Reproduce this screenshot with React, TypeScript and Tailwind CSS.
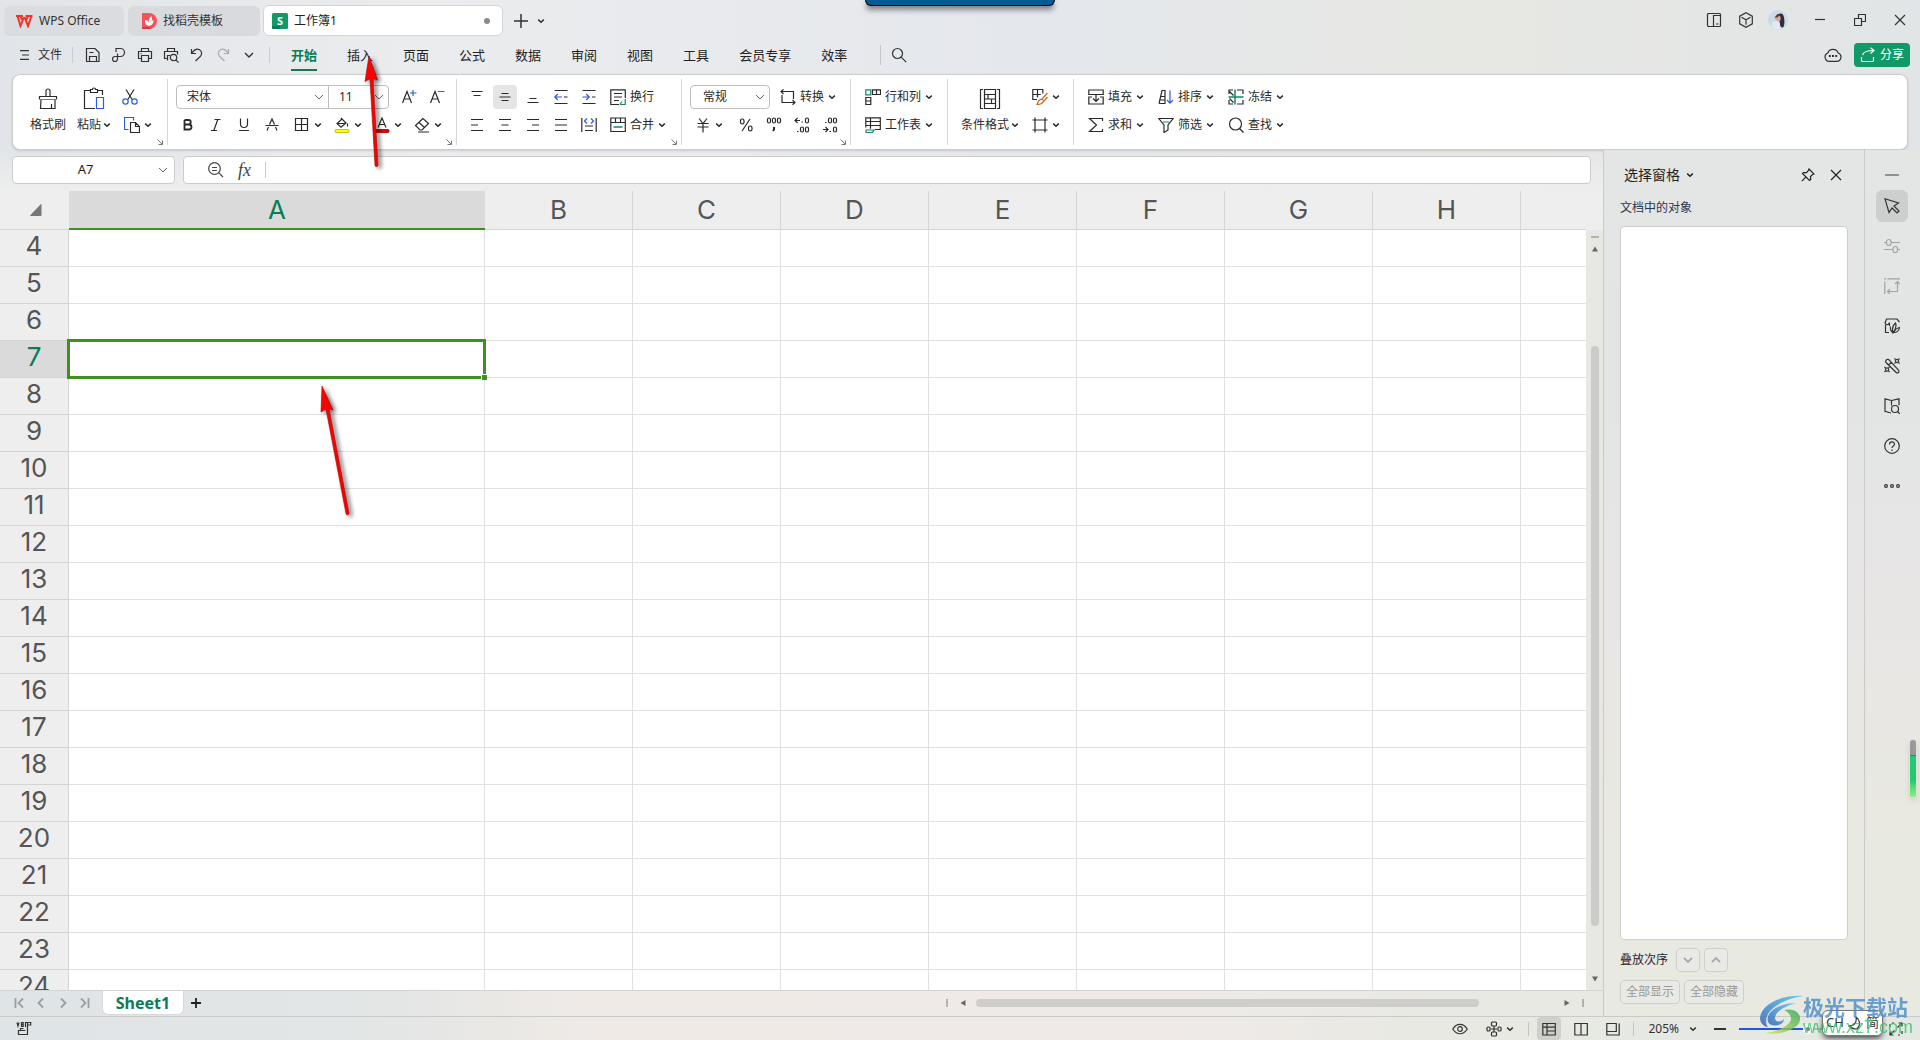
import { useState } from "react";
import type { ReactNode } from "react";
import clsx from "clsx";

const MENU_TABS = ["开始", "插入", "页面", "公式", "数据", "审阅", "视图", "工具", "会员专享", "效率"];
const COLUMNS = ["A", "B", "C", "D", "E", "F", "G", "H"];
const ROWS = Array.from({ length: 21 }, (_, i) => i + 4);

const GREEN = "#0f8a5f";
const BLUE = "#2b5be0";
const ORANGE = "#c8642a";

/* ---------- small building blocks ---------- */

function Icon({ size = 16, width = 1.2, className, children }: {
  size?: number;
  width?: number;
  className?: string;
  children: ReactNode;
}) {
  return (
    <svg
      width={size}
      height={size}
      viewBox={`0 0 ${size} ${size}`}
      fill="none"
      stroke="currentColor"
      strokeWidth={width}
      className={clsx("shrink-0", className)}
      aria-hidden="true"
    >
      {children}
    </svg>
  );
}

function Chevron({ className }: { className?: string }) {
  return (
    <Icon size={8} width={1.5} className={className}>
      <path d="M1.2 2.6 4 5.2l2.8-2.6" />
    </Icon>
  );
}

function WideChevron({ className, width = 1 }: { className?: string; width?: number }) {
  return (
    <Icon size={10} width={width} className={className}>
      <path d="M1 3l4 4 4-4" />
    </Icon>
  );
}

function IconButton({ label, active, children }: { label: string; active?: boolean; children: ReactNode }) {
  return (
    <button type="button" aria-label={label} className="flex h-6 w-7 items-center justify-center">
      <span className={clsx("flex h-6 w-6 items-center justify-center rounded", active && "bg-[#e5e5e5]")}>
        {children}
      </span>
    </button>
  );
}

// icon with a drop-down arrow
function SplitButton({ label, children }: { label: string; children: ReactNode }) {
  return (
    <button type="button" aria-label={label} className="flex h-6 w-10 items-center gap-1 pl-2">
      {children}
      <Chevron />
    </button>
  );
}

function TextButton({ text, menu = true, className, children }: {
  text: string;
  menu?: boolean;
  className?: string;
  children: ReactNode;
}) {
  return (
    <button type="button" className={clsx("flex h-6 items-center gap-1 whitespace-nowrap", className)}>
      {children}
      {text}
      {menu && <Chevron />}
    </button>
  );
}

function Group({ className, corner, children }: { className?: string; corner?: boolean; children: ReactNode }) {
  return (
    <div className={clsx("my-1 shrink-0 border-r border-[#d6d6d6] pt-1", className)}>
      {children}
      {corner && (
        <div className="flex justify-end pr-1">
          <Icon size={6} width={1} className="text-[#777]">
            <path d="M.5.5l4.5 4.5M5.5 1.500v4h-4" />
          </Icon>
        </div>
      )}
    </div>
  );
}

function Row({ children }: { children: ReactNode }) {
  return <div className="flex h-7 items-center">{children}</div>;
}

/* ---------- title bar ---------- */

function TitleBar() {
  return (
    <div className="flex h-9 items-end pl-1 text-xs text-[#333]">
      <button type="button" className="flex h-[30px] w-30 items-center gap-1.5 rounded-md bg-[#dadcdf] pl-3 whitespace-nowrap">
        <svg width="17" height="14" viewBox="0 0 17 14" fill="none" stroke="#f0342b" strokeWidth="2" className="shrink-0">
          <path d="M0 2h7M1.500 2l3 10L8 3M4.500 2l1.500 4M16.500 2h-7M15.500 2l-3.500 10L8.500 3M12 2l-1.500 4" />
        </svg>
        WPS Office
      </button>
      <button type="button" className="ml-1 flex h-[30px] w-33 items-center gap-1.5 rounded-md bg-[#d9dadd] pl-3.5 whitespace-nowrap">
        <svg width="15" height="16" viewBox="0 0 15 16" className="shrink-0">
          <path d="M0 0h7a8 8 0 0 1 0 16H0z" fill="#f2545b" />
          <path d="M0 14h7l3 1-3 1H0z" fill="#d93a44" />
          <path d="M7 13C3 12 3 9 3 7c2 0 3 1 3.500 3C6.500 7 7 5 9.500 3c1 3 .5 4 0 5l2-1c0 3-1 5-4.500 6z" fill="#fff" />
        </svg>
        找稻壳模板
      </button>
      <div className="ml-[3px] flex h-[31px] w-60 items-center rounded-md border border-[#d3d4d6] bg-white pl-2 text-[#222]">
        <svg width="16" height="16" viewBox="0 0 16 16" className="mr-1.5">
          <rect width="16" height="16" rx="1.500" fill="#109a67" />
          <path d="M0 13h8v3H1.500A1.500 1.500 0 0 1 0 14.500z" fill="#0a7a50" />
          <text x="8" y="11.500" textAnchor="middle" fontSize="11" fontWeight="700" fill="#fff" fontFamily="Noto Sans, sans-serif">
            S
          </text>
        </svg>
        工作簿1
        <span className="mr-3 ml-auto h-1.5 w-1.5 rounded-full bg-[#8b8b8b]" />
      </div>
      <button type="button" aria-label="新建" className="ml-1.5 flex h-[30px] w-6 items-center justify-center">
        <Icon size={14} width={1.5}>
          <path d="M7 0v14M0 7h14" />
        </Icon>
      </button>
      <button type="button" aria-label="标签列表" className="flex h-[30px] w-4 items-center justify-center">
        <Chevron />
      </button>

      <div className="ml-auto flex h-8 items-center">
        <button type="button" aria-label="分屏" className="flex w-8 justify-center">
          <Icon>
            <rect x="1.500" y="1.500" width="13" height="13" rx="1" />
            <path d="M7.500 14.500v-11h7M10 12h2.500" />
          </Icon>
        </button>
        <button type="button" aria-label="应用" className="flex w-8 justify-center">
          <Icon>
            <path d="M8 .8l6.300 3.400v7.600L8 15.200l-6.300-3.400V4.200zM3.500 5.200 8 7.700l4.500-2.500M8 7.700v5" />
          </Icon>
        </button>
        <button type="button" aria-label="账号" className="flex w-8 justify-center">
          <svg width="20" height="20" viewBox="0 0 20 20">
            <circle cx="10" cy="10" r="10" fill="#ccd9e6" />
            <path d="M10 4.500c3-2 5.500-.5 6 3s.8 6-.5 9.500c-1.500 1-3 0-3.500-2l-1-7z" fill="#352a38" />
            <path d="M7.500 7c1-2.500 4.500-2 5 0s0 4.500-2 4.500-4-2-3-4.500z" fill="#d9a59b" />
            <path d="M6.500 7.500l3-3.500 3 1-3.500 2.500z" fill="#4a3a44" />
            <path d="M4 12.500l5-2 3 3v6c-3 .5-6 0-8.500-2.500z" fill="#dfeaf2" />
          </svg>
        </button>
        <button type="button" aria-label="最小化" className="ml-1.5 flex w-10 justify-center">
          <Icon size={12}>
            <path d="M1 5.500h10" />
          </Icon>
        </button>
        <button type="button" aria-label="还原" className="flex w-10 justify-center">
          <Icon size={12}>
            <path d="M.5 4.500h7v7h-7zM4.500 4.500v-4h7v7h-4" />
          </Icon>
        </button>
        <button type="button" aria-label="关闭" className="flex w-10 justify-center">
          <Icon size={12}>
            <path d="M1 1l10 10M11 1 1 11" />
          </Icon>
        </button>
      </div>
    </div>
  );
}

/* ---------- menu bar ---------- */

function MenuBar({ tab, onTab }: { tab: string; onTab: (t: string) => void }) {
  return (
    <div className="flex h-[38px] items-center text-[#333]">
      <button type="button" className="ml-5 flex w-10 items-center gap-2 text-xs whitespace-nowrap">
        <Icon size={10}>
          <path d="M0 .6h9M2 5h7M0 9.400h9" />
        </Icon>
        文件
      </button>
      <div className="mr-[7px] ml-3 h-4 w-px bg-[#c9cbce]" />
      <div className="flex">
        <IconCell label="保存">
          <path d="M2 1.500h8l4 4v9H1.500v-13zM4.500 14.500V9.500h7v5M4.500 5.500h4" />
        </IconCell>
        <IconCell label="输出为PDF">
          <path d="M5 5V1.500h4.500a4 4 0 0 1 0 8H4a2.500 2.500 0 1 0 2.500 2.500V6.500" />
        </IconCell>
        <IconCell label="打印">
          <path d="M4.500 4.500v-3h7v3M4 11.500H1.500v-7h13v7H12M4.500 8.500h7v6h-7zM3.500 6.500h1" />
        </IconCell>
        <IconCell label="打印预览">
          <path d="M4.500 4.500v-3h7v3M4 11.500H1.500v-7h13v3M4.500 13.500v-5H7" />
          <circle cx="10.500" cy="10.500" r="3.200" />
          <path d="M12.800 12.800l2.700 2.700" />
        </IconCell>
        <IconCell label="撤销">
          <path d="M2.500 2v4.500H7M2.800 6.200C5 3 8 1.500 10.500 2.800c3 1.700 2.500 5 .5 7L6.500 14" />
        </IconCell>
        <IconCell label="恢复" dim>
          <path d="M13.500 2v4.500H9M13.200 6.200C11 3 8 1.500 5.500 2.800c-3 1.700-2.500 5-.5 7L9.500 14" />
        </IconCell>
        <button type="button" aria-label="更多" className="flex w-[26px] items-center justify-center">
          <WideChevron width={1.4} />
        </button>
      </div>
      <div className="mr-[21px] ml-[7px] h-4 w-px bg-[#c9cbce]" />
      <nav className="flex gap-[30px] pt-[3px] text-[13px]">
        {MENU_TABS.map((t) => (
          <button
            key={t}
            type="button"
            onClick={() => onTab(t)}
            className={clsx(
              "h-7 border-b-2 whitespace-nowrap",
              t === tab ? "border-[#0a7d55] font-bold text-[#0a7d55]" : "border-transparent text-[#222]",
            )}
          >
            {t}
          </button>
        ))}
      </nav>
      <div className="ml-[33px] h-5 w-px bg-[#c4c6c9]" />
      <button type="button" aria-label="搜索" className="ml-2.5">
        <Icon>
          <circle cx="6.500" cy="6.500" r="5" />
          <path d="M10.200 10.200l5 5" />
        </Icon>
      </button>

      <button type="button" aria-label="云状态" className="ml-auto">
        <svg width="18" height="16" viewBox="0 0 18 16" fill="none" stroke="currentColor" strokeWidth="1.200">
          <path d="M5.500 14.300a4.300 4.300 0 0 1-1.700-8.300 5.500 5.500 0 0 1 10.400 0 4.300 4.300 0 0 1-1.700 8.300z" />
          <path d="M4.800 9h2M8 9h2M11.200 9h2" strokeWidth="2" />
        </svg>
      </button>
      <button
        type="button"
        className="mr-2.5 ml-3 flex h-6 w-14 items-center gap-1 rounded bg-[#109a67] pl-1.5 text-xs whitespace-nowrap text-white"
      >
        <Icon>
          <path d="M1.500 10v3.500a1 1 0 0 0 1 1h10a1 1 0 0 0 1-1V10M2.500 8c1-3 4-4.500 11-4.500M10.500 .8l3.500 2.700-3.500 3" />
        </Icon>
        分享
      </button>
    </div>
  );
}

function IconCell({ label, dim, children }: { label: string; dim?: boolean; children: ReactNode }) {
  return (
    <button type="button" aria-label={label} className="flex w-[26px] justify-center">
      <Icon className={dim ? "text-[#a9abae]" : undefined}>{children}</Icon>
    </button>
  );
}

/* ---------- ribbon ---------- */

function Ribbon() {
  return (
    <section className="mx-3 flex h-[76px] overflow-hidden rounded-lg border border-[#cbcccd] bg-white pl-px text-xs text-[#2a2a2a] shadow-sm">
      <Group className="w-[154px]" corner>
        <div className="flex pl-2.5">
          <button type="button" className="flex w-12 flex-col items-center pt-1">
            <Icon size={24}>
              <path d="M10 9.500V4a2 2 0 0 1 4 0v5.500M3.500 12.500v-3h17v3M5 12.500l-.5 9h14.500v-9M15.500 21v-4" />
              <path d="M4 12.500h16" stroke={ORANGE} />
            </Icon>
            <span className="leading-7 whitespace-nowrap">格式刷</span>
          </button>
          <button type="button" className="flex w-11 flex-col items-center pt-1">
            <Icon size={24}>
              <path d="M8 3.500H2.500v18H13M16 3.500h4.500V8M8.500 5.500v-3h2a1.500 1.500 0 0 1 3 0h2v3z" />
              <path d="M14.500 10.500h7v11h-7z" stroke={BLUE} />
            </Icon>
            <span className="flex items-center gap-0.5 leading-7 whitespace-nowrap">
              粘贴
              <Chevron />
            </span>
          </button>
          <div>
            <Row>
              <IconButton label="剪切">
                <Icon>
                  <path d="M4 .5l6.500 10.500M12 .5 5.500 11" />
                  <circle cx="3.500" cy="12.500" r="2.700" stroke={BLUE} />
                  <circle cx="12.500" cy="12.500" r="2.700" stroke={BLUE} />
                </Icon>
              </IconButton>
            </Row>
            <Row>
              <SplitButton label="复制">
                <Icon>
                  <path d="M4.500 12.500h-4v-12h9v3" stroke={BLUE} />
                  <path d="M6.500 5.500h5l4 4v6h-9zM11.500 5.500v4h4" />
                </Icon>
              </SplitButton>
            </Row>
          </div>
        </div>
      </Group>

      <Group className="w-[289px]" corner>
        <Row>
          <div className="ml-2 flex h-6 w-[213px] rounded border border-[#bdbdbd]">
            <label className="flex w-[152px] items-center border-r border-[#bdbdbd]">
              <select aria-label="字体" className="min-w-0 flex-1 appearance-none pl-2.5 outline-none">
                <option>宋体</option>
              </select>
              <WideChevron className="mr-1 text-[#666]" />
            </label>
            <label className="flex flex-1 items-center">
              <select aria-label="字号" className="min-w-0 flex-1 appearance-none pl-2.5 outline-none">
                <option>11</option>
              </select>
              <WideChevron className="mr-1 text-[#666]" />
            </label>
          </div>
          <div className="ml-1.5 flex">
            <IconButton label="增大字号">
              <Icon>
                <path d="M1.500 14 6 2.500 10.500 14M3 10h6" />
                <path d="M12 1v6M9 4h6.500" stroke={BLUE} />
              </Icon>
            </IconButton>
            <IconButton label="减小字号">
              <Icon>
                <path d="M1.500 14 6 2.500 10.500 14M3 10h6" />
                <path d="M9 2.500h6.500" stroke={BLUE} />
              </Icon>
            </IconButton>
          </div>
        </Row>
        <Row>
          <div className="flex pl-1.5">
            <IconButton label="加粗">
              <Icon width={1.8}>
                <path d="M4.500 3v9.500H9a2.500 2.500 0 0 0 0-5H4.500M4.500 3h4a2.200 2.200 0 0 1 0 4.500" />
              </Icon>
            </IconButton>
            <IconButton label="倾斜">
              <Icon>
                <path d="M6.500 2.500h6M3 13.500h6M9.800 2.500l-4 11" />
              </Icon>
            </IconButton>
            <IconButton label="下划线">
              <Icon>
                <path d="M4.500 1.500V7a3.500 3.500 0 0 0 7 0V1.500M3 13.500h10" />
              </Icon>
            </IconButton>
            <IconButton label="删除线">
              <Icon>
                <path d="M5.500 7.500 8 2l2.500 5.500M4.500 10 3 13.500M11.500 10l1.500 3.500M1.500 8.500h13" />
              </Icon>
            </IconButton>
            <SplitButton label="边框">
              <Icon>
                <path d="M1.500 1.500h12v12h-12zM7.500 1.500v12M1.500 7.500h12" />
              </Icon>
            </SplitButton>
            <SplitButton label="填充颜色">
              <Icon>
                <path d="M8 2 3 6.500l4 3.800L12 6 7 1M3.500 6.500h8M13.500 6.500v3" />
                <rect x="1" y="12.500" width="14" height="3" rx="1" fill="#ffff00" stroke="#b5b500" strokeWidth=".8" />
              </Icon>
            </SplitButton>
            <SplitButton label="字体颜色">
              <Icon>
                <path d="M4 10.500 8 1l4 9.500M5.500 7.500h5" />
                <rect x="1" y="12.500" width="14" height="3" rx="1" fill="#e60000" stroke="#a80000" strokeWidth=".8" />
              </Icon>
            </SplitButton>
            <SplitButton label="清除">
              <Icon>
                <path d="M9 1.500 1.500 8.500 6 13h2L14.500 6.500zM5 5.500l5.500 5M4 15h11" />
              </Icon>
            </SplitButton>
          </div>
        </Row>
      </Group>

      <Group className="w-[225px]" corner>
        <Row>
          <div className="flex pl-1.5">
            <IconButton label="顶端对齐">
              <Icon>
                <path d="M2.500 2.500h11M4.500 6.500h7" />
              </Icon>
            </IconButton>
            <IconButton label="垂直居中" active>
              <Icon>
                <path d="M4.500 4.500h7M2.500 8h11M4.500 11.500h7" />
              </Icon>
            </IconButton>
            <IconButton label="底端对齐">
              <Icon>
                <path d="M4.500 9.500h7M2.500 13.500h11" />
              </Icon>
            </IconButton>
            <IconButton label="减少缩进">
              <Icon>
                <path d="M1.500 1.500h13M11 8h3.500M1.500 14.500h13" />
                <path d="M9 8H2M4.800 5 1.800 8l3 3" stroke={BLUE} />
              </Icon>
            </IconButton>
            <IconButton label="增加缩进">
              <Icon>
                <path d="M1.500 1.500h13M11 8h3.500M1.500 14.500h13" />
                <path d="M1.500 8H8M5.200 5l3 3-3 3" stroke={BLUE} />
              </Icon>
            </IconButton>
          </div>
          <TextButton text="换行" menu={false} className="pl-[7px]">
            <Icon>
              <path d="M9 15.500H.8V.8h14.500V9M4 4.500h8M4 8h8M4 11.500h5" />
              <path d="M15.200 10v5.500H10M12 12.500l-2 3" stroke={GREEN} />
            </Icon>
          </TextButton>
        </Row>
        <Row>
          <div className="flex pl-1.5">
            <IconButton label="左对齐">
              <Icon>
                <path d="M2 2.500h12M2 8h7M2 13.500h12" />
              </Icon>
            </IconButton>
            <IconButton label="居中">
              <Icon>
                <path d="M2 2.500h12M4.500 8h7M2 13.500h12" />
              </Icon>
            </IconButton>
            <IconButton label="右对齐">
              <Icon>
                <path d="M2 2.500h12M7 8h7M2 13.500h12" />
              </Icon>
            </IconButton>
            <IconButton label="两端对齐">
              <Icon>
                <path d="M2 2.500h12M2 8h12M2 13.500h12" />
              </Icon>
            </IconButton>
            <IconButton label="分散对齐">
              <Icon>
                <path d="M.8 1v14M15.200 1v14M4 9h8M4 13.500h8" />
                <path d="M6 1.500 3.500 4 6 6.500M10 1.500 12.500 4 10 6.500" stroke={BLUE} />
              </Icon>
            </IconButton>
          </div>
          <TextButton text="合并" className="pl-[7px]">
            <Icon>
              <path d="M.8 1h14.500v13.500H.8zM.8 5.500h14.500M5.500 1v4.500M10.500 1v4.500" />
              <path d="M3.500 10h9" stroke={GREEN} strokeWidth="1.600" />
            </Icon>
          </TextButton>
        </Row>
      </Group>

      <Group className="w-[169px]" corner>
        <Row>
          <label className="ml-2 flex h-6 w-20 items-center rounded border border-[#bdbdbd]">
            <select aria-label="数字格式" className="min-w-0 flex-1 appearance-none pl-3 outline-none">
              <option>常规</option>
            </select>
            <WideChevron className="mr-1 text-[#666]" />
          </label>
          <TextButton text="转换" className="ml-2.5">
            <Icon>
              <path d="M2 6v7.500h13M12.500 11l2.500 2.500-2.500 2.300M13.500 10V2.500H1M3.500 .3 1 2.500 3.500 5" />
            </Icon>
          </TextButton>
        </Row>
        <Row>
          <div className="flex pl-[5px]">
            <SplitButton label="货币">
              <Icon>
                <path d="M4 1.500l4 5 4-5M2.500 6.500h11M2.500 10h11M8 6.500v9" />
              </Icon>
            </SplitButton>
            <div className="ml-[5px] flex">
              <IconButton label="百分比">
                <Icon>
                  <path d="M12 2 4 14" />
                  <rect x="2.500" y="2" width="3.500" height="5" rx="1.700" />
                  <rect x="10.500" y="9" width="3.500" height="5" rx="1.700" />
                </Icon>
              </IconButton>
              <IconButton label="千位分隔">
                <Icon>
                  <rect x="1.500" y="1" width="3" height="5" rx="1.500" />
                  <rect x="6.500" y="1" width="3" height="5" rx="1.500" />
                  <rect x="11.500" y="1" width="3" height="5" rx="1.500" />
                  <path d="M8 10v2.500L7 14" strokeWidth="2" />
                </Icon>
              </IconButton>
              <IconButton label="增加小数位">
                <Icon>
                  <path d="M6 3.500H1M3.500 1 1 3.500 3.500 6M7.500 5h1.500M3 14.500h1.500" />
                  <rect x="11.500" y="1" width="3" height="5" rx="1.500" />
                  <rect x="11.500" y="10" width="3" height="5" rx="1.500" />
                  <rect x="6.500" y="10" width="3" height="5" rx="1.500" />
                </Icon>
              </IconButton>
              <IconButton label="减少小数位">
                <Icon>
                  <path d="M1 12.500h5M3.500 10 6 12.500 3.500 15M7.500 14.500H9M3 5.500h1.500" />
                  <rect x="11.500" y="1" width="3" height="5" rx="1.500" />
                  <rect x="6.500" y="1" width="3" height="5" rx="1.500" />
                  <rect x="11.500" y="10" width="3" height="5" rx="1.500" />
                </Icon>
              </IconButton>
            </div>
          </div>
        </Row>
      </Group>

      <Group className="w-[97px] pl-3.5">
        <Row>
          <TextButton text="行和列">
            <Icon>
              <path d="M7.500 5.500V.8h8v4.700zM11.500 .8v4.700M.8 8.500h5v7h-5zM.8 12h5" />
              <path d="M.8 .8h5v5h-5z" stroke={GREEN} />
            </Icon>
          </TextButton>
        </Row>
        <Row>
          <TextButton text="工作表">
            <Icon>
              <path d="M.8 10.500V.8h14.500v11.700H10M.8 4.500h14.500M.8 10.500V8.500h14.500M5.500 .8v11" />
              <path d="M1 13h8l-1.500 2.500H1z" stroke={GREEN} />
            </Icon>
          </TextButton>
        </Row>
      </Group>

      <Group className="w-[126px] pl-3">
        <div className="flex">
          <button type="button" className="flex w-15 flex-col items-center pt-1">
            <Icon size={24}>
              <path d="M5 2.500H2.500v19H5M19 2.500h2.500v19H19M6.500 2.500h11v19h-11zM6.500 7.500h11M6.500 16.500h11M10 7.500v4.500h7.500M6.500 12h7v4.500" />
            </Icon>
            <span className="flex items-center gap-0.5 leading-7 whitespace-nowrap">
              条件格式
              <Chevron />
            </span>
          </button>
          <div className="ml-1">
            <Row>
              <SplitButton label="表格样式">
                <Icon>
                  <path d="M5 10.500H.8v-10h10v4M.8 5.500h8M5.500 .5v8" />
                  <path d="M15.500 4 10 10M15.500 8l-3.500 4M5 15.500c1-3 2-6 5-5s1 5-5 5z" stroke={ORANGE} />
                </Icon>
              </SplitButton>
            </Row>
            <Row>
              <SplitButton label="单元格">
                <Icon>
                  <path d="M3 .5v15M13 .5v15M.5 3h15M.5 13h15" />
                </Icon>
              </SplitButton>
            </Row>
          </div>
        </div>
      </Group>

      <div className="pt-2 pl-3.5">
        <Row>
          <TextButton text="填充" className="w-[70px]">
            <Icon>
              <path d="M.8 5.500V1h14.400v4.500zM4 8H.8v7h14.400V8H12M8 6v6.500M5 9.500l3 3 3-3" />
            </Icon>
          </TextButton>
          <TextButton text="排序" className="w-[70px]">
            <Icon>
              <path d="M1 14.500 4 1.500h3v6H2.800M7 7.500v7H1M1.800 11H7" />
              <path d="M12 1.500V14M9 11l3 3.200 3-3.200" stroke={BLUE} />
            </Icon>
          </TextButton>
          <TextButton text="冻结">
            <Icon>
              <path d="M1 5V1h4M1 11v4h4M9 1h6v4M9 15h6v-4M1.500 2.500l4 4M1.500 9.500l4 4" />
              <path d="M7 .5v15M.5 8h15" stroke={GREEN} strokeWidth="1.500" />
            </Icon>
          </TextButton>
        </Row>
        <Row>
          <TextButton text="求和" className="w-[70px]">
            <Icon>
              <path d="M14.500 4V1.500h-13L8.500 8l-7 6.500h13V12" />
            </Icon>
          </TextButton>
          <TextButton text="筛选" className="w-[70px]">
            <Icon>
              <path d="M.8 1.500h14.400L10 8v5l-4 2.500V8z" />
              <path d="M5 5h6" stroke={GREEN} />
            </Icon>
          </TextButton>
          <TextButton text="查找">
            <Icon>
              <circle cx="7.500" cy="7" r="6" />
              <path d="M11.500 11.500l4 4" />
            </Icon>
          </TextButton>
        </Row>
      </div>
    </section>
  );
}

/* ---------- formula bar and grid ---------- */

function FormulaBar() {
  return (
    <div className="flex h-[41px] items-start gap-2 bg-linear-to-b from-[#eeeeee]/0 to-[#eeeeee] pt-1.5 pr-3 pl-3 text-[13px] text-[#222]">
      <div className="flex h-7 w-[163px] items-center rounded border border-[#cacbcb] bg-white pr-1.5">
        <input aria-label="名称框" defaultValue="A7" className="min-w-0 flex-1 text-center outline-none" />
        <WideChevron className="text-[#666]" />
      </div>
      <div className="flex h-7 flex-1 items-center rounded border border-[#cacbcb] bg-white pl-6">
        <Icon className="text-[#444]">
          <circle cx="6.500" cy="6.500" r="5.800" />
          <path d="M10.700 10.700l4.300 4.300M4 5.500h5M4 8.500h5" />
        </Icon>
        <span className="ml-3.5 w-5 font-['Liberation_Serif',serif] text-lg leading-5 text-[#444] italic">fx</span>
        <span className="ml-[7px] h-4 w-px bg-[#ccc]" />
        <input aria-label="编辑栏" className="min-w-0 flex-1 px-2 outline-none" />
      </div>
    </div>
  );
}

function Grid() {
  return (
    <div className="flex min-h-0 flex-1 overflow-hidden bg-[#eeeeee]">
      <div className="min-w-0 flex-1 overflow-hidden">
        <table className="w-full table-fixed border-separate border-spacing-0 font-['Inter','Noto_Sans',sans-serif] text-[26px] leading-8 text-[#555]">
          <colgroup>
            <col className="w-[69px]" />
            <col className="w-[416px]" />
            {COLUMNS.slice(1).map((c) => (
              <col key={c} className="w-[148px]" />
            ))}
            <col />
          </colgroup>
          <thead>
            <tr className="h-[39px]">
              <th className="border-b border-[#d4d4d4] p-0">
                <svg width="12" height="12" viewBox="0 0 12 12" className="ml-[30px]" aria-hidden="true">
                  <path d="M11 .5v11H.5z" fill="#777" stroke="#777" strokeLinejoin="round" />
                </svg>
              </th>
              {COLUMNS.map((c) => (
                <th
                  key={c}
                  scope="col"
                  className={clsx(
                    "p-0 font-normal",
                    c === "A"
                      ? "border-b-2 border-[#3f8f22] bg-[#dadada] text-[#0a7d55]"
                      : "border-r border-b border-[#d4d4d4]",
                  )}
                >
                  {c}
                </th>
              ))}
              <th className="border-b border-[#d4d4d4] p-0" />
            </tr>
          </thead>
          <tbody>
            {ROWS.map((r) => (
              <tr key={r} className="h-[37px]">
                <th
                  scope="row"
                  className={clsx(
                    "border-r border-b border-[#d4d4d4] p-0 align-top font-normal",
                    r === 7 ? "bg-[#dadada] text-[#0a7d55]" : "bg-[#eeeeee]",
                  )}
                >
                  {r}
                </th>
                {COLUMNS.map((c) => (
                  <td key={c} className="relative border-r border-b border-[#e1e1e1] bg-white p-0">
                    {r === 7 && c === "A" && (
                      <div className="absolute -inset-0.5 z-10 border-3 border-[#3f8f22]">
                        <span className="absolute -right-1 -bottom-1 h-1.5 w-1.5 border-t border-l border-white bg-[#3f8f22]" />
                      </div>
                    )}
                  </td>
                ))}
                <td className="border-b border-[#e1e1e1] bg-white p-0" />
              </tr>
            ))}
          </tbody>
        </table>
      </div>
      <div className="flex w-[17px] shrink-0 flex-col pt-[39px]">
        <div className="flex min-h-0 flex-1 flex-col items-center bg-[#e6e8e1] pt-1.5 pb-2">
          <span className="h-0.5 w-2 bg-[#b2b3b0]" />
          <Triangle className="mt-2" />
          <span className="mt-[94px] min-h-0 w-2 flex-1 rounded-full bg-[#cbccc9]" />
          <Triangle className="mt-[50px] rotate-180" />
        </div>
      </div>
    </div>
  );
}

function Triangle({ className }: { className?: string }) {
  return (
    <svg width="6" height="6" viewBox="0 0 6 6" className={clsx("shrink-0", className)} aria-hidden="true">
      <path d="M3 .5 6 5.500H0z" fill="#666" />
    </svg>
  );
}

function SheetTabs() {
  return (
    <div className="flex h-[26px] shrink-0 items-start border-t border-[#d2d4d3] text-[#9b9d9f]">
      <div className="flex h-6 items-center gap-2.5 pl-[13px]">
        <Icon size={12} width={1.8}>
          <path d="M2.500 1v10M10 1.500 5.500 6l4.500 4.500" />
        </Icon>
        <Icon size={12} width={1.8}>
          <path d="M8 1.500 3.500 6 8 10.500" />
        </Icon>
        <Icon size={12} width={1.8}>
          <path d="M4 1.500 8.500 6 4 10.500" />
        </Icon>
        <Icon size={12} width={1.8}>
          <path d="M2 1.500 6.500 6 2 10.500M9.500 1v10" />
        </Icon>
      </div>
      <button
        type="button"
        className="ml-[11px] h-6 w-[82px] rounded-b-md border border-t-0 border-[#d8dada] bg-white text-base leading-5 font-bold text-[#0a7d55]"
      >
        Sheet1
      </button>
      <button type="button" aria-label="新建工作表" className="flex h-6 w-6 items-center justify-center text-[#222]">
        <Icon size={10} width={1.8}>
          <path d="M5 0v10M0 5h10" />
        </Icon>
      </button>
      <div className="ml-auto flex h-6 w-[657px] items-center">
        <span className="h-2 w-0.5 bg-[#b5b3b1]" />
        <Triangle className="ml-3 -rotate-90" />
        <span className="ml-2.5 h-2 w-[503px] rounded-full bg-[#cfcdca]" />
        <Triangle className="mr-3 ml-auto rotate-90" />
        <span className="mr-[19px] h-2 w-0.5 bg-[#b0b1ac]" />
      </div>
    </div>
  );
}

/* ---------- selection pane and side bar ---------- */

function SelectionPane() {
  return (
    <aside className="flex w-[261px] shrink-0 flex-col border-l border-[#c9cbc8] pr-4 pl-4 text-xs text-[#2b3550]">
      <div className="flex h-[49px] items-center pl-1 text-sm text-[#222]">
        选择窗格
        <Chevron className="ml-1.5" />
        <button type="button" aria-label="固定" className="ml-auto">
          <Icon size={14}>
            <path d="M8 1l5 5-1.500.5-2 2 .2 3L8.500 12.500 1.500 5.500l1-1 3 .2L7.500 2.500zM4.800 9.200.8 13.200" />
          </Icon>
        </button>
        <button type="button" aria-label="关闭窗格" className="mr-1.5 ml-[15px]">
          <Icon size={12}>
            <path d="M1 1l10 10M11 1 1 11" />
          </Icon>
        </button>
      </div>
      <div className="h-[27px] pt-px leading-4">文档中的对象</div>
      <div className="min-h-0 flex-1 rounded border border-[#cccecd] bg-white" />
      <div className="mt-2 flex h-6 items-center text-[#1f2533]">
        <span className="w-14">叠放次序</span>
        <button type="button" aria-label="下移一层" className="flex h-6 w-6 items-center justify-center rounded border border-[#cfd0ca] bg-[#e9eae5] text-[#aaa]">
          <WideChevron width={1.8} />
        </button>
        <button type="button" aria-label="上移一层" className="ml-1 flex h-6 w-6 items-center justify-center rounded border border-[#cfd0ca] bg-[#e9eae5] text-[#aaa]">
          <WideChevron width={1.8} className="rotate-180" />
        </button>
      </div>
      <div className="mt-2 mb-3 flex gap-1 text-[#999]">
        <button type="button" className="h-6 w-15 rounded border border-[#cfd0ca] bg-[#e9eae5] whitespace-nowrap">
          全部显示
        </button>
        <button type="button" className="h-6 w-15 rounded border border-[#cfd0ca] bg-[#e9eae5] whitespace-nowrap">
          全部隐藏
        </button>
      </div>
    </aside>
  );
}

function SideIcon({ label, active, dim, children }: { label: string; active?: boolean; dim?: boolean; children: ReactNode }) {
  return (
    <button
      type="button"
      aria-label={label}
      className={clsx(
        "flex h-8 w-8 items-center justify-center rounded-md",
        active && "bg-[#cdcfce]",
        dim ? "text-[#a2a4a4]" : "text-[#333]",
      )}
    >
      <Icon>{children}</Icon>
    </button>
  );
}

function SideBar() {
  return (
    <div className="flex w-14 shrink-0 flex-col items-center gap-2 border-l border-[#c9cbca] pt-6 pr-px">
      <span className="mb-1.5 h-0.5 w-3.5 bg-[#8f9192]" />
      <SideIcon label="选择" active>
        <path d="M1 .8 14.500 5 10 8l5 5-2 2-5-5-3 4.500z" />
      </SideIcon>
      <SideIcon label="属性" dim>
        <path d="M0 4.500h2.500M7 4.500h9M0 11.500h9M13.500 11.500H16" />
        <rect x="2.500" y="1.500" width="4.500" height="6" rx="2.200" />
        <rect x="9" y="8.500" width="4.500" height="6" rx="2.200" />
      </SideIcon>
      <SideIcon label="转换" dim>
        <path d="M3.500 .8H16M.8 3.500V16M0 .8h2M13.500 4v9.500H4M11 6l2.500-2.500L16 6M6 11l-2.500 2.500L6 16" />
      </SideIcon>
      <SideIcon label="稻壳资源">
        <path d="M5 14.500H1.500V7M1 5.500 2.500 1h10.500l2.500 3M1 4.500c0 3 3.500 3 4.500 0M5.500 5v3M9 15c-3-2-3-4-2.500-6.500M9 15c-1-4 0-8 2.500-10 1 3 0 7-2.500 10zM10 14.500c1-3 3-4.500 5.500-5-.5 3-2.500 5-5.500 5z" />
      </SideIcon>
      <SideIcon label="智能工具">
        <path d="M2 4.500a2 2 0 0 1 3.300-2.300l9.200 10a1.500 1.500 0 0 1-2.300 2.300zM4.500 7l2.700-2.700" />
        <circle cx="13" cy="3" r="1.600" />
        <circle cx="3" cy="11.500" r="1.600" />
        <path d="M15.500 .5l-1 1M10.500 5.500l1-1M10.500 .5l1 1M15.500 5.500l-1-1M.5 14l1-1M5.500 9l-1 1M.5 9l1 1M5.500 14l-1-1" />
      </SideIcon>
      <SideIcon label="查阅">
        <path d="M7.500 2.500 1 .8v12.500l6 1.700M7.500 2.500 15 .8v6.500M7.500 2.500v5" />
        <circle cx="11" cy="11" r="3.500" />
        <path d="M13.500 13.500 16 16" />
      </SideIcon>
      <SideIcon label="帮助">
        <circle cx="8" cy="8" r="7.300" />
        <path d="M5.500 6.500c0-3.500 5-3.300 5-.4C10.500 8 8 8 8 10M8 11.500V13" />
      </SideIcon>
      <SideIcon label="更多">
        <circle cx="2" cy="8" r="1.400" />
        <circle cx="8" cy="8" r="1.400" />
        <circle cx="14" cy="8" r="1.400" />
      </SideIcon>
    </div>
  );
}

/* ---------- status bar ---------- */

function StatusBar() {
  return (
    <div className="flex h-6 shrink-0 items-center border-t border-[#c8cac8] text-[#333]">
      <button type="button" aria-label="宏" className="ml-4">
        <Icon>
          <path d="M1 1.500 2 5l1-3.500M5.500 1.500v4h1.700v-4zM5.500 3.500h2M9.500 6V1.500h5.200V4H12M11.500 2v11.500H2.500v-4h7M4.500 9.500V7.500h3" />
        </Icon>
      </button>
      <button type="button" aria-label="护眼模式" className="ml-auto">
        <Icon>
          <path d="M.8 8C4.500 1.700 11.500 1.700 15.200 8 11.500 14.300 4.500 14.300.8 8z" />
          <circle cx="8" cy="8" r="2.300" />
        </Icon>
      </button>
      <button type="button" aria-label="阅读模式" className="ml-[18px] flex items-center gap-1">
        <Icon>
          <rect x="5.500" y="1" width="5" height="4" rx="1" />
          <rect x="5.500" y="11" width="5" height="4" rx="1" />
          <rect x="1" y="6" width="3" height="4" rx="1" />
          <rect x="12" y="6" width="3" height="4" rx="1" />
          <path d="M8 5v6M5 8h6" />
        </Icon>
        <Chevron />
      </button>
      <span className="mr-2 ml-3.5 h-3.5 w-px bg-[#c4c5bf]" />
      <div className="flex gap-2">
        <button type="button" aria-label="普通视图" className="flex h-[23px] w-6 items-center justify-center rounded bg-[#cfd0cb]">
          <Icon size={14}>
            <path d="M.8 1.500h12.500v11.500H.8zM.8 5.200h12.500M5 1.500V13M5 9h8.300" />
          </Icon>
        </button>
        <button type="button" aria-label="分页预览" className="flex h-[23px] w-6 items-center justify-center">
          <Icon size={14}>
            <path d="M.8 1.500h12.500v11.500H.8zM7 1.500V13" />
          </Icon>
        </button>
        <button type="button" aria-label="页面布局" className="flex h-[23px] w-6 items-center justify-center">
          <Icon size={14}>
            <path d="M.8 1.500h9.500v8H.8zM13.200 1.500V13H.8v-3.500" />
          </Icon>
        </button>
      </div>
      <span className="mr-3.5 ml-2 h-3.5 w-px bg-[#c4c5bf]" />
      <button type="button" className="flex items-center gap-2.5 text-xs">
        205%
        <Chevron />
      </button>
      <button type="button" aria-label="缩小" className="ml-4">
        <Icon size={14} width={2}>
          <path d="M1 7h12" />
        </Icon>
      </button>
      <input
        type="range"
        aria-label="缩放"
        defaultValue={50}
        className="ml-3 h-0.5 w-[138px] appearance-none bg-[linear-gradient(to_right,#2455dd_50%,#b9bab6_50%)] [&::-webkit-slider-thumb]:h-2.5 [&::-webkit-slider-thumb]:w-2.5 [&::-webkit-slider-thumb]:appearance-none [&::-webkit-slider-thumb]:rounded-full [&::-webkit-slider-thumb]:border-3 [&::-webkit-slider-thumb]:border-white [&::-webkit-slider-thumb]:bg-[#777]"
      />
      <button type="button" aria-label="全屏" className="mr-[17px] ml-3">
        <Icon size={14}>
          <path d="M8.500 5.500 13 1M9.500 1H13v3.500M5.500 8.500 1 13M1 9.500V13h3.500M1 5V2M3 1h2M13 9v3M9 13h2" />
        </Icon>
      </button>
    </div>
  );
}

/* ---------- things floating over the window ---------- */

function Overlays() {
  return (
    <div className="pointer-events-none absolute inset-0 z-20 overflow-hidden">
      <div className="absolute top-0 left-[865px] h-1.5 w-[190px] rounded-b-md border border-t-0 border-black bg-[#005b94] shadow-md shadow-black/60" />
      <svg width="400" height="530" viewBox="0 0 400 530" className="absolute top-0 left-0 drop-shadow-[3px_2px_2px_rgba(0,0,0,0.55)]">
        <g fill="#f00" stroke="#a00000" strokeWidth=".6">
          <path d="M369 56l8.500 24-4.500-1.500 5 86.500a1.500 1.500 0 0 1-3 .3l-5-86.500-5 2.700z" />
          <path d="M322 386l11 24-4-1.500 20 104.500a1.500 1.500 0 0 1-3 .6l-20-104.500-5 3z" />
        </g>
      </svg>

      <div className="absolute top-[739px] right-[3px] flex h-[59px] w-2 flex-col overflow-hidden rounded-full border border-white/70 bg-[#999] shadow-md">
        <span className="mt-[15px] flex-1 border-t border-[#16934f] bg-linear-to-b from-[#22c970] from-60% to-[#86f47c]" />
      </div>

      <div className="absolute right-[37px] bottom-1 flex h-[26px] w-[61px] items-center justify-center rounded-md border border-[#777] bg-white text-[13px] whitespace-nowrap text-[#333] shadow-md shadow-black/50">
        CH
        <Icon size={14} className="mx-1">
          <path d="M8 1c4 3 5 8 1 12-3 0-6-1-8-3 5 0 8-3 7-9z" />
        </Icon>
        简
      </div>

      <div className="absolute right-3 bottom-[5px] flex items-center opacity-80">
        <svg width="44" height="40" viewBox="0 0 44 40">
          <defs>
            <linearGradient id="swirlBlue" x1="0" y1="1" x2="1" y2="0">
              <stop offset="0" stopColor="#2b5fb4" />
              <stop offset="1" stopColor="#4fc3ee" />
            </linearGradient>
            <linearGradient id="swirlGreen" x1="0" y1="1" x2="1" y2="0">
              <stop offset="0" stopColor="#d8e04a" />
              <stop offset="1" stopColor="#2fa85a" />
            </linearGradient>
          </defs>
          <path d="M44 1C24-1 2 9 1 23c0 6 5 9 8 9C2 22 14 6 44 1z" fill="url(#swirlBlue)" />
          <path d="M37 8C20 8 6 17 9 27c3 6 16 4 16-3-2 3-9 4-9-1 0-6 10-12 21-15z" fill="url(#swirlBlue)" />
          <path d="M25 15c9-2 17 2 16 10C40 34 21 41 6 38c12-1 25-7 26-14 0-4-3-7-7-9z" fill="url(#swirlGreen)" />
        </svg>
        <div className="w-[105px] whitespace-nowrap">
          <div className="text-[21px] leading-6 font-bold text-[#4a8ccc]">极光下载站</div>
          <div className="font-['Liberation_Sans',sans-serif] text-[18px] leading-4 text-[#3fbf6b]">www.xz7.com</div>
        </div>
      </div>
    </div>
  );
}

export default function App() {
  const [tab, setTab] = useState("开始");

  return (
    <div className="relative flex h-screen flex-col overflow-hidden bg-[linear-gradient(to_right,#e1e5e9_0%,#ebecee_22%,#e4e7ec_55%,#e7e8e3_76%,#e2e5e7_100%)] font-['Noto_Sans','Noto_Sans_CJK_SC',sans-serif]">
      <TitleBar />
      <MenuBar tab={tab} onTab={setTab} />
      <Ribbon />
      <div className="flex min-h-0 flex-1">
        <main className="flex min-w-0 flex-1 flex-col">
          <FormulaBar />
          <Grid />
          <div className="bg-[linear-gradient(to_right,#dfe4e7_0%,#e3e6e5_24%,#efeae6_36%,#efeae8_74%,#e8e9e2_90%)]">
            <SheetTabs />
          </div>
        </main>
        <div className="flex bg-[linear-gradient(to_bottom,#e3e6e5_0%,#e3e5e5_30%,#e8e6e5_52%,#e8e9e1_80%,#e8e9e1_100%)]">
          <SelectionPane />
          <SideBar />
        </div>
      </div>
      <div className="bg-[linear-gradient(to_right,#dfe4e7_0%,#e3e6e5_20%,#efeae6_31%,#efeae8_62%,#e8e9e2_75%,#e4e8e4_100%)]">
        <StatusBar />
      </div>
      <Overlays />
    </div>
  );
}
